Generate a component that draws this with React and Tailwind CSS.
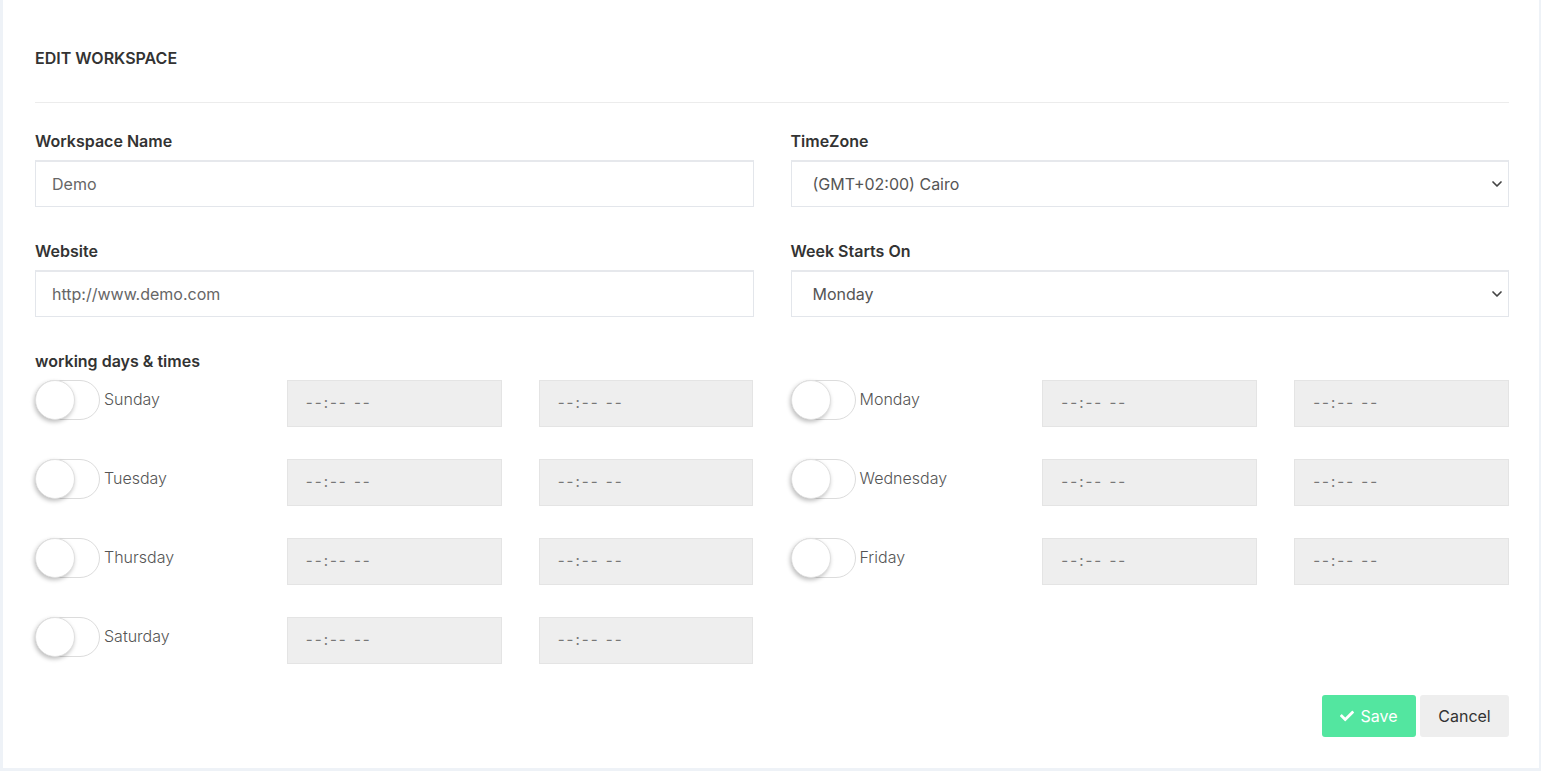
import React from 'react';
import { FaCheck } from 'react-icons/fa';

const font = { fontFamily: 'Inter, "Noto Sans", sans-serif' };

const Chevron = () => (
  <svg width="12" height="12" viewBox="0 0 12 12" className="text-[#444]">
    <path d="M2 4l4 4 4-4" fill="none" stroke="currentColor" strokeWidth="1.7" strokeLinecap="round" strokeLinejoin="round" />
  </svg>
);

const TextField = ({ label, value }) => (
  <div className="flex flex-col gap-2">
    <label className="text-[16px] leading-[22px] font-semibold text-[#333]">{label}</label>
    <div className="h-[47px] border border-[#e3e6eb] border-t-2 border-t-[#e6e8ec] bg-white flex items-center px-4 text-[16px] text-[#666]">
      {value}
    </div>
  </div>
);

const SelectField = ({ label, value }) => (
  <div className="flex flex-col gap-2">
    <label className="text-[16px] leading-[22px] font-semibold text-[#333]">{label}</label>
    <div className="h-[47px] border border-[#e3e6eb] border-t-2 border-t-[#e6e8ec] bg-white flex items-center justify-between pl-[21px] pr-[5px] text-[16px] text-[#555]">
      <span>{value}</span>
      <Chevron />
    </div>
  </div>
);

const Toggle = () => (
  <div className="relative w-[65px] h-[40px] rounded-full border border-[#dcdcdc] bg-white shrink-0">
    <div className="absolute left-[-1px] top-[-1px] w-[40px] h-[40px] rounded-full bg-white border border-[#e0e0e0] shadow-[-1px_2px_4px_rgba(0,0,0,0.25)]" />
  </div>
);

const TimeBox = () => (
  <div className="h-[47px] bg-[#eeeeee] border border-[#e4e4e4] flex items-center pl-[18px] text-[15px] text-[#777] tracking-[2px]">
    --:-- --
  </div>
);

const Day = ({ name }) => (
  <div className="grid grid-cols-3 gap-x-[37px]">
    <div className="flex items-start gap-1">
      <Toggle />
      <span className="pt-[8px] text-[16px] leading-[22px] font-light text-[#555]">{name}</span>
    </div>
    <TimeBox />
    <TimeBox />
  </div>
);

export default function App() {
  const days = ['Sunday', 'Monday', 'Tuesday', 'Wednesday', 'Thursday', 'Friday', 'Saturday'];
  return (
    <div className="min-h-[771px] bg-[#eef2f7] pl-[3px] pr-[2px]" style={font}>
      <div className="bg-white h-[768px] pt-[47px] pl-[32px] pr-[30px]">
        <h1 className="text-[16px] leading-[22px] font-semibold text-[#333] uppercase">Edit Workspace</h1>
        <div className="mt-[33px] border-t border-[#ececec]" />
        <div className="mt-[27px] grid grid-cols-2 gap-x-[37px] gap-y-[33px]">
          <TextField label="Workspace Name" value="Demo" />
          <SelectField label="TimeZone" value="(GMT+02:00) Cairo" />
          <TextField label="Website" value="http://www.demo.com" />
          <SelectField label="Week Starts On" value="Monday" />
        </div>
        <div className="mt-[33px] text-[16px] leading-[22px] font-semibold text-[#333]">working days &amp; times</div>
        <div className="mt-2 grid grid-cols-2 gap-x-[37px] gap-y-[32px]">
          {days.map((d) => (
            <Day key={d} name={d} />
          ))}
        </div>
        <div className="mt-[31px] flex justify-end gap-1">
          <button className="h-[42px] w-[94px] rounded-[3px] bg-[#53e6a0] text-white text-[16px] flex items-center justify-center gap-1.5">
            <FaCheck size={14} />
            Save
          </button>
          <button className="h-[42px] w-[89px] rounded-[3px] bg-[#eeeeee] text-[#333] text-[16px]">Cancel</button>
        </div>
      </div>
    </div>
  );
}
